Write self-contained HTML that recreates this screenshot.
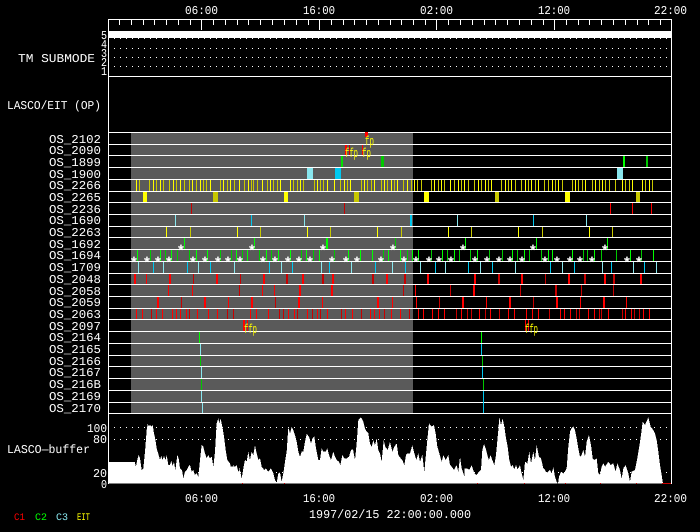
<!DOCTYPE html>
<html><head><meta charset="utf-8"><title>LASCO/EIT plan</title>
<style>
html,body{margin:0;padding:0;background:#000;width:700px;height:532px;overflow:hidden}
svg{display:block}
text{font-family:"Liberation Mono",monospace;fill:#fff;font-size:12px;text-rendering:geometricPrecision}
.s{font-family:"Liberation Sans",sans-serif;font-size:15px;font-weight:700}
.f{fill:#ffff00;font-size:13px}
.l{shape-rendering:crispEdges;fill:none}
</style></head><body>
<svg width="700" height="532" viewBox="0 0 700 532" xmlns="http://www.w3.org/2000/svg">
<rect width="700" height="532" fill="#000"/>
<rect x="131" y="132" width="282" height="281" fill="#5a5a5a" style="shape-rendering:crispEdges"/>
<rect x="108" y="31" width="563" height="7" fill="#fff" style="shape-rendering:crispEdges"/>

<path class="l" stroke="#fff" stroke-dasharray="1 5" d="M114 38.5H668M114 48.5H668M114 57.5H668M114 66.5H668M114 427.5H668M114 439.5H668M114 472.5H668"/>

<!-- histogram -->
<g style="shape-rendering:crispEdges">
<polygon transform="translate(0,410) scale(.33333)" fill="#fff" points="326,221 326,156 403,156 403,152 408,170 412,148 416,135 420,145 425,180 430,175 435,125 440,60 443,42 447,50 450,44 454,50 458,44 462,70 466,88 470,115 476,135 480,150 484,138 488,150 492,138 497,150 500,135 505,165 510,165 514,152 518,168 522,155 526,180 532,135 536,145 540,175 546,180 550,205 555,185 560,180 565,170 570,165 575,185 580,180 585,195 590,190 595,200 600,150 605,105 610,110 615,130 620,145 625,135 630,145 635,140 640,170 645,125 650,40 655,25 658,40 662,25 667,50 672,80 677,120 682,150 690,160 695,180 700,165 705,180 710,165 716,195 720,170 721,221"/>
<polygon transform="translate(235,410) scale(.33333)" fill="#fff" points="-15,221 -15,170 0,170 5,165 10,185 15,180 20,205 25,175 30,150 35,155 40,125 45,150 50,125 55,135 60,105 65,130 70,150 75,145 80,170 88,180 92,175 100,185 108,175 115,190 120,210 125,218 130,190 135,187 140,215 145,190 150,155 155,125 160,52 165,70 170,50 175,60 180,75 185,95 190,125 195,140 200,125 205,125 210,95 215,72 222,80 228,100 233,85 238,80 243,115 250,150 255,150 260,115 265,125 272,125 277,115 282,135 288,150 295,125 300,140 305,150 312,155 316,165 322,135 328,145 335,145 342,140 348,120 354,118 360,150 365,100 370,30 378,22 385,35 390,55 395,65 400,70 405,100 410,110 415,90 420,105 425,85 430,120 435,130 440,155 446,90 451,110 458,120 465,95 472,125 478,110 485,100 490,135 497,145 502,150 508,165 513,135 518,130 525,130 532,105 538,130 544,150 550,130 555,155 562,135 568,185 575,110 582,40 590,50 597,45 602,70 607,110 613,130 620,155 625,135 632,150 640,135 645,165 650,170 657,180 665,165 670,185 675,140 680,175 690,205 695,175 705,180 706,221"/>
<polygon transform="translate(465,410) scale(.33333)" fill="#fff" points="-2,221 -2,175 0,175 5,175 10,185 15,175 20,165 28,190 35,195 42,185 48,180 52,120 57,102 62,115 67,135 72,150 77,135 82,150 88,165 93,135 100,60 103,22 108,45 113,25 118,50 123,85 128,110 133,150 138,170 143,165 148,178 153,165 158,178 165,165 170,190 175,210 180,155 187,160 193,125 198,160 205,125 210,150 215,105 222,140 228,145 235,175 240,180 245,190 250,185 255,180 260,190 265,172 270,200 275,215 279,221 282,200 288,185 295,190 300,185 305,175 310,110 315,65 320,55 325,50 330,60 335,85 340,115 345,140 350,135 355,120 360,140 365,95 372,75 378,105 383,145 388,150 395,145 400,190 405,195 410,170 415,160 420,170 430,155 437,165 445,160 452,185 457,160 465,180 470,205 475,175 482,165 490,190 495,215 500,185 510,180 515,155 522,115 528,75 533,35 540,45 550,22 557,50 565,60 570,70 575,90 580,125 585,165 590,195 594,221"/>
</g>
<path class="l" stroke="#c80000" d="M242.5 483v1M284.5 483v1M477.5 483v1M524.5 483v1M565.5 483v1M600.5 483v1M636.5 483v1M662 483.5H671"/>

<!-- frame -->
<path class="l" stroke="#fff" d="M108.5 19V484M671.5 19V484M108 19.5H672M108 76.5H672M108 132.5H672M108 144.5H672M108 155.5H672M108 167.5H672M108 179.5H672M108 191.5H672M108 202.5H672M108 214.5H672M108 226.5H672M108 237.5H672M108 249.5H672M108 261.5H672M108 273.5H672M108 284.5H672M108 296.5H672M108 308.5H672M108 319.5H672M108 331.5H672M108 343.5H672M108 355.5H672M108 366.5H672M108 378.5H672M108 390.5H672M108 402.5H672M108 413.5H672"/>
<path class="l" stroke="#fff" d="M119.5 19v6M131.5 19v6M143.5 19v6M154.5 19v6M166.5 19v6M178.5 19v6M190.5 19v6M213.5 19v6M225.5 19v6M237.5 19v6M248.5 19v6M260.5 19v6M272.5 19v6M284.5 19v6M296.5 19v6M308.5 19v6M331.5 19v6M343.5 19v6M354.5 19v6M366.5 19v6M378.5 19v6M390.5 19v6M401.5 19v6M413.5 19v6M425.5 19v6M448.5 19v6M460.5 19v6M472.5 19v6M484.5 19v6M495.5 19v6M507.5 19v6M519.5 19v6M531.5 19v6M543.5 19v6M566.5 19v6M578.5 19v6M589.5 19v6M601.5 19v6M613.5 19v6M625.5 19v6M637.5 19v6M648.5 19v6M660.5 19v6M201.5 19v11M319.5 19v11M436.5 19v11M554.5 19v11"/>

<!-- yellow rows 2266 + 2263 -->
<path class="l" stroke="#ffff00" d="M136.5 180v11M153.5 180v11M160.5 180v11M173.5 180v11M180.5 180v11M192.5 180v11M200.5 180v11M210.5 180v11M223.5 180v11M230.5 180v11M239.5 180v11M248.5 180v11M262.5 180v11M270.5 180v11M280.5 180v11M290.5 180v11M300.5 180v11M317.5 180v11M327.5 180v11M334.5 180v11M344.5 180v11M350.5 180v11M364.5 180v11M374.5 180v11M384.5 180v11M391.5 180v11M397.5 180v11M407.5 180v11M414.5 180v11M434.5 180v11M441.5 180v11M450.5 180v11M458.5 180v11M464.5 180v11M478.5 180v11M485.5 180v11M491.5 180v11M505.5 180v11M511.5 180v11M525.5 180v11M531.5 180v11M538.5 180v11M552.5 180v11M558.5 180v11M575.5 180v11M585.5 180v11M595.5 180v11M602.5 180v11M622.5 180v11M632.5 180v11M642.5 180v11M649.5 180v11
M166.5 227v10M237.5 227v10M307.5 227v10M377.5 227v10M448.5 227v10M518.5 227v10M589.5 227v10"/>
<path class="l" stroke="#c8c800" d="M139.5 180v11M149.5 180v11M156.5 180v11M163.5 180v11M169.5 180v11M176.5 180v11M184.5 180v11M189.5 180v11M196.5 180v11M203.5 180v11M206.5 180v11M220.5 180v11M227.5 180v11M234.5 180v11M244.5 180v11M251.5 180v11M253.5 180v11M257.5 180v11M267.5 180v11M273.5 180v11M277.5 180v11M293.5 180v11M297.5 180v11M303.5 180v11M314.5 180v11M320.5 180v11M323.5 180v11M340.5 180v11M347.5 180v11M361.5 180v11M367.5 180v11M371.5 180v11M381.5 180v11M387.5 180v11M394.5 180v11M403.5 180v11M411.5 180v11M417.5 180v11M421.5 180v11M431.5 180v11M438.5 180v11M444.5 180v11M454.5 180v11M461.5 180v11M468.5 180v11M474.5 180v11M481.5 180v11M488.5 180v11M501.5 180v11M508.5 180v11M515.5 180v11M521.5 180v11M528.5 180v11M535.5 180v11M544.5 180v11M548.5 180v11M555.5 180v11M562.5 180v11M572.5 180v11M578.5 180v11M582.5 180v11M592.5 180v11M599.5 180v11M605.5 180v11M609.5 180v11M615.5 180v11M625.5 180v11M629.5 180v11M645.5 180v11M652.5 180v11
M190.5 227v10M260.5 227v10M330.5 227v10M401.5 227v10M471.5 227v10M542.5 227v10M612.5 227v10"/>
<g style="shape-rendering:crispEdges" fill="#ffff00">
<rect x="143" y="192" width="4" height="10"/><rect x="284" y="192" width="4" height="10"/><rect x="424" y="192" width="5" height="10"/><rect x="565" y="192" width="5" height="10"/>
</g>
<g style="shape-rendering:crispEdges" fill="#c8c800">
<rect x="213" y="192" width="5" height="10"/><rect x="354" y="192" width="5" height="10"/><rect x="495" y="192" width="4" height="10"/><rect x="636" y="192" width="4" height="10"/>
</g>

<!-- cyan -->
<g style="shape-rendering:crispEdges">
<rect x="307" y="168" width="6" height="11" fill="#88e6ee"/><rect x="335" y="168" width="6" height="11" fill="#00c8f0"/><rect x="617" y="168" width="6" height="11" fill="#88e6ee"/>
</g>
<path class="l" stroke="#88e6ee" d="M175.5 215v11M304.5 215v11M457.5 215v11M586.5 215v11
M138.5 262v11M163.5 262v11M198.5 262v11M234.5 262v11M281.5 262v11M321.5 262v11M351.5 262v11M392.5 262v11M420.5 262v11M445.5 262v11M480.5 262v11M515.5 262v11M562.5 262v11M602.5 262v11M633.5 262v11M656.5 262v11
M200.5 344v11M201.5 367v11M201.5 391v11M202.5 403v10"/>
<path class="l" stroke="#00c8f0" d="M251.5 215v11M410.5 215v11M411.5 215v11M533.5 215v11
M153.5 262v11M187.5 262v11M210.5 262v11M269.5 262v11M292.5 262v11M329.5 262v11M375.5 262v11M405.5 262v11M435.5 262v11M468.5 262v11M492.5 262v11M550.5 262v11M574.5 262v11M611.5 262v11M644.5 262v11
M481.5 344v11M482.5 367v11M483.5 391v22"/>

<!-- green -->
<path class="l" stroke="#00ff00" d="M184.5 238v11M254.5 238v11M326.5 238v11M327.5 238v11M465.5 238v11M536.5 238v11M607.5 238v11
M137.5 250v11M160.5 250v11M171.5 250v11M196.5 250v11M207.5 250v11M236.5 250v11M247.5 250v11M266.5 250v11M278.5 250v11M290.5 250v11M306.5 250v11M319.5 250v11M348.5 250v11M360.5 250v11M372.5 250v11M388.5 250v11M400.5 250v11M412.5 250v11M418.5 250v11M442.5 250v11M454.5 250v11M477.5 250v11M512.5 250v11M524.5 250v11M548.5 250v11M552.5 250v11M572.5 250v11M594.5 250v11M630.5 250v11M653.5 250v11
M199.5 332v11M481.5 332v11M623.5 156v11M624.5 156v11"/>
<path class="l" stroke="#00c800" d="M395.5 238v11M150.5 250v11M165.5 250v11M177.5 250v11M189.5 250v11M220.5 250v11M231.5 250v11M242.5 250v11M259.5 250v11M271.5 250v11M301.5 250v11M313.5 250v11M334.5 250v11M383.5 250v11M407.5 250v11M431.5 250v11M447.5 250v11M459.5 250v11M470.5 250v11M489.5 250v11M502.5 250v11M517.5 250v11M529.5 250v11M541.5 250v11M583.5 250v11M587.5 250v11M601.5 250v11M616.5 250v11M641.5 250v11M200.5 356v10M482.5 356v10M201.5 379v11M483.5 379v11M646.5 156v11M647.5 156v11"/>
<path stroke="#00e000" stroke-width="2" style="shape-rendering:crispEdges" fill="none" d="M342 156v11"/>
<path stroke="#00c800" stroke-width="3" style="shape-rendering:crispEdges" fill="none" d="M382.5 156v11"/>

<!-- red -->
<path class="l" stroke="#ff0000" d="M146.5 274v10M168.5 285v11M192.5 285v11M262.5 285v11M274.5 285v11M415.5 285v11M228.5 297v11M322.5 297v11M392.5 297v11M416.5 297v11M486.5 297v11M580.5 297v11M626.5 297v11
M136.5 309v10M142.5 309v10M156.5 309v10M162.5 309v10M172.5 309v10M176.5 309v10M180.5 309v10M186.5 309v10M197.5 309v10M208.5 309v10M217.5 309v10M250.5 309v10M256.5 309v10M268.5 309v10M288.5 309v10M294.5 309v10M307.5 309v10M317.5 309v10M327.5 309v10M345.5 309v10M352.5 309v10M370.5 309v10M374.5 309v10M379.5 309v10M391.5 309v10M400.5 309v10M418.5 309v10M423.5 309v10M432.5 309v10M438.5 309v10M444.5 309v10M461.5 309v10M479.5 309v10M490.5 309v10M508.5 309v10M514.5 309v10M526.5 309v10M532.5 309v10M538.5 309v10M560.5 309v10M564.5 309v10M570.5 309v10M588.5 309v10M594.5 309v10M608.5 309v10M625.5 309v10M631.5 309v10M643.5 309v10M649.5 309v10
M610.5 203v11M632.5 203v11M651.5 203v11M345.5 145v10M362.5 145v10M346.5 145v10M528.5 320v11M525.5 320v11M247.5 320v11"/>
<path class="l" stroke="#c80000" d="M193.5 274v10M240.5 274v10M239.5 285v11M403.5 285v11M450.5 285v11M520.5 285v11M581.5 285v11M613.5 285v11M181.5 297v11M275.5 297v11M439.5 297v11M533.5 297v11M545.5 274v10M191.5 203v11M344.5 203v11M349.5 145v10
M151.5 309v10M189.5 309v10M227.5 309v10M233.5 309v10M279.5 309v10M283.5 309v10M297.5 309v10M312.5 309v10M320.5 309v10M341.5 309v10M361.5 309v10M384.5 309v10M409.5 309v10M456.5 309v10M467.5 309v10M471.5 309v10M485.5 309v10M499.5 309v10M549.5 309v10M576.5 309v10M579.5 309v10M599.5 309v10M601.5 309v10M622.5 309v10M634.5 309v10M639.5 309v10"/>
<path stroke="#ff0000" stroke-width="2" fill="none" style="shape-rendering:crispEdges" d="M135 274v10M170 274v10M217 274v10M264 274v10M303 274v10M333 274v10M387 274v10M428 274v10M475 274v10M522 274v10M569 274v10M605 274v10M641 274v10M300 285v11M332 285v11M474 285v11M158 297v11M205 297v11M252 297v11M299 297v11M378 297v11M463 297v11M510 297v11M557 297v11M604 297v11M244 320v11"/>
<path stroke="#c80000" stroke-width="2" fill="none" style="shape-rendering:crispEdges" d="M287 274v10M323 274v10M373 274v10M405 274v10M499 274v10M585 274v10M614 274v10M556 285v11"/>
<rect x="365" y="132" width="3" height="5" fill="#ff0000" style="shape-rendering:crispEdges"/>

<!-- white stars -->
<g transform="translate(-1,0)">
<text class="s" y="255" x="179 250 321 391 461 531 603">*******</text>
<text class="s" y="267" x="132 145 156 167 191 203 216 226 238 261 273 286 297 308 330 344 355 379 402 414 427 437 449 473 485 497 508 520 543 555 568 578 590 625 637">***********************************</text>
</g>

<!-- fp markers -->
<text class="f" x="365" y="145" textLength="9" lengthAdjust="spacingAndGlyphs">fp</text>
<text class="f" x="345" y="157" textLength="13" lengthAdjust="spacingAndGlyphs">ffp</text>
<text class="f" x="362" y="157" textLength="9" lengthAdjust="spacingAndGlyphs">fp</text>
<text class="f" x="244" y="333" textLength="13" lengthAdjust="spacingAndGlyphs">ffp</text>
<text class="f" x="525" y="333" textLength="13" lengthAdjust="spacingAndGlyphs">ffp</text>

<!-- axis labels -->
<text x="185" y="14" textLength="33" lengthAdjust="spacingAndGlyphs">06:00</text>
<text x="303" y="14" textLength="32" lengthAdjust="spacingAndGlyphs">16:00</text>
<text x="420" y="14" textLength="33" lengthAdjust="spacingAndGlyphs">02:00</text>
<text x="538" y="14" textLength="32" lengthAdjust="spacingAndGlyphs">12:00</text>
<text x="654" y="14" textLength="33" lengthAdjust="spacingAndGlyphs">22:00</text>
<text x="185" y="502" textLength="33" lengthAdjust="spacingAndGlyphs">06:00</text>
<text x="303" y="502" textLength="32" lengthAdjust="spacingAndGlyphs">16:00</text>
<text x="420" y="502" textLength="33" lengthAdjust="spacingAndGlyphs">02:00</text>
<text x="538" y="502" textLength="32" lengthAdjust="spacingAndGlyphs">12:00</text>
<text x="654" y="502" textLength="33" lengthAdjust="spacingAndGlyphs">22:00</text>
<text x="309" y="518" textLength="162" lengthAdjust="spacingAndGlyphs">1997/02/15 22:00:00.000</text>

<text x="101" y="39" textLength="6" lengthAdjust="spacingAndGlyphs">5</text>
<text x="101" y="48" textLength="6" lengthAdjust="spacingAndGlyphs">4</text>
<text x="101" y="57" textLength="6" lengthAdjust="spacingAndGlyphs">3</text>
<text x="101" y="66" textLength="6" lengthAdjust="spacingAndGlyphs">2</text>
<text x="101" y="75" textLength="6" lengthAdjust="spacingAndGlyphs">1</text>
<text x="18" y="62" textLength="77" lengthAdjust="spacingAndGlyphs">TM SUBMODE</text>
<text x="7" y="109" textLength="94" lengthAdjust="spacingAndGlyphs">LASCO/EIT (OP)</text>

<text x="49" y="143" textLength="52" lengthAdjust="spacingAndGlyphs">OS_2102</text>
<text x="49" y="154" textLength="52" lengthAdjust="spacingAndGlyphs">OS_2090</text>
<text x="49" y="166" textLength="52" lengthAdjust="spacingAndGlyphs">OS_1899</text>
<text x="49" y="178" textLength="52" lengthAdjust="spacingAndGlyphs">OS_1900</text>
<text x="49" y="189" textLength="52" lengthAdjust="spacingAndGlyphs">OS_2266</text>
<text x="49" y="201" textLength="52" lengthAdjust="spacingAndGlyphs">OS_2265</text>
<text x="49" y="213" textLength="52" lengthAdjust="spacingAndGlyphs">OS_2236</text>
<text x="49" y="224" textLength="52" lengthAdjust="spacingAndGlyphs">OS_1690</text>
<text x="49" y="236" textLength="52" lengthAdjust="spacingAndGlyphs">OS_2263</text>
<text x="49" y="248" textLength="52" lengthAdjust="spacingAndGlyphs">OS_1692</text>
<text x="49" y="259" textLength="52" lengthAdjust="spacingAndGlyphs">OS_1694</text>
<text x="49" y="271" textLength="52" lengthAdjust="spacingAndGlyphs">OS_1709</text>
<text x="49" y="283" textLength="52" lengthAdjust="spacingAndGlyphs">OS_2048</text>
<text x="49" y="295" textLength="52" lengthAdjust="spacingAndGlyphs">OS_2058</text>
<text x="49" y="306" textLength="52" lengthAdjust="spacingAndGlyphs">OS_2059</text>
<text x="49" y="318" textLength="52" lengthAdjust="spacingAndGlyphs">OS_2063</text>
<text x="49" y="330" textLength="52" lengthAdjust="spacingAndGlyphs">OS_2097</text>
<text x="49" y="341" textLength="52" lengthAdjust="spacingAndGlyphs">OS_2164</text>
<text x="49" y="353" textLength="52" lengthAdjust="spacingAndGlyphs">OS_2165</text>
<text x="49" y="365" textLength="52" lengthAdjust="spacingAndGlyphs">OS_2166</text>
<text x="49" y="376" textLength="52" lengthAdjust="spacingAndGlyphs">OS_2167</text>
<text x="49" y="388" textLength="52" lengthAdjust="spacingAndGlyphs">OS_216B</text>
<text x="49" y="400" textLength="52" lengthAdjust="spacingAndGlyphs">OS_2169</text>
<text x="49" y="412" textLength="52" lengthAdjust="spacingAndGlyphs">OS_2170</text>

<text x="87" y="432" textLength="20" lengthAdjust="spacingAndGlyphs">100</text>
<text x="93" y="443" textLength="14" lengthAdjust="spacingAndGlyphs">80</text>
<text x="7" y="453" textLength="83" lengthAdjust="spacingAndGlyphs">LASCO—buffer</text>
<text x="93" y="477" textLength="14" lengthAdjust="spacingAndGlyphs">20</text>
<text x="101" y="488" textLength="6" lengthAdjust="spacingAndGlyphs">0</text>

<text x="14" y="520" style="fill:#ff0000;font-size:10px" textLength="11" lengthAdjust="spacingAndGlyphs">C1</text>
<text x="35" y="520" style="fill:#00ff00;font-size:10px" textLength="12" lengthAdjust="spacingAndGlyphs">C2</text>
<text x="56" y="520" style="fill:#88e6ee;font-size:10px" textLength="12" lengthAdjust="spacingAndGlyphs">C3</text>
<text x="77" y="520" style="fill:#ffff00;font-size:10px" textLength="13" lengthAdjust="spacingAndGlyphs">EIT</text>
</svg>
</body></html>
